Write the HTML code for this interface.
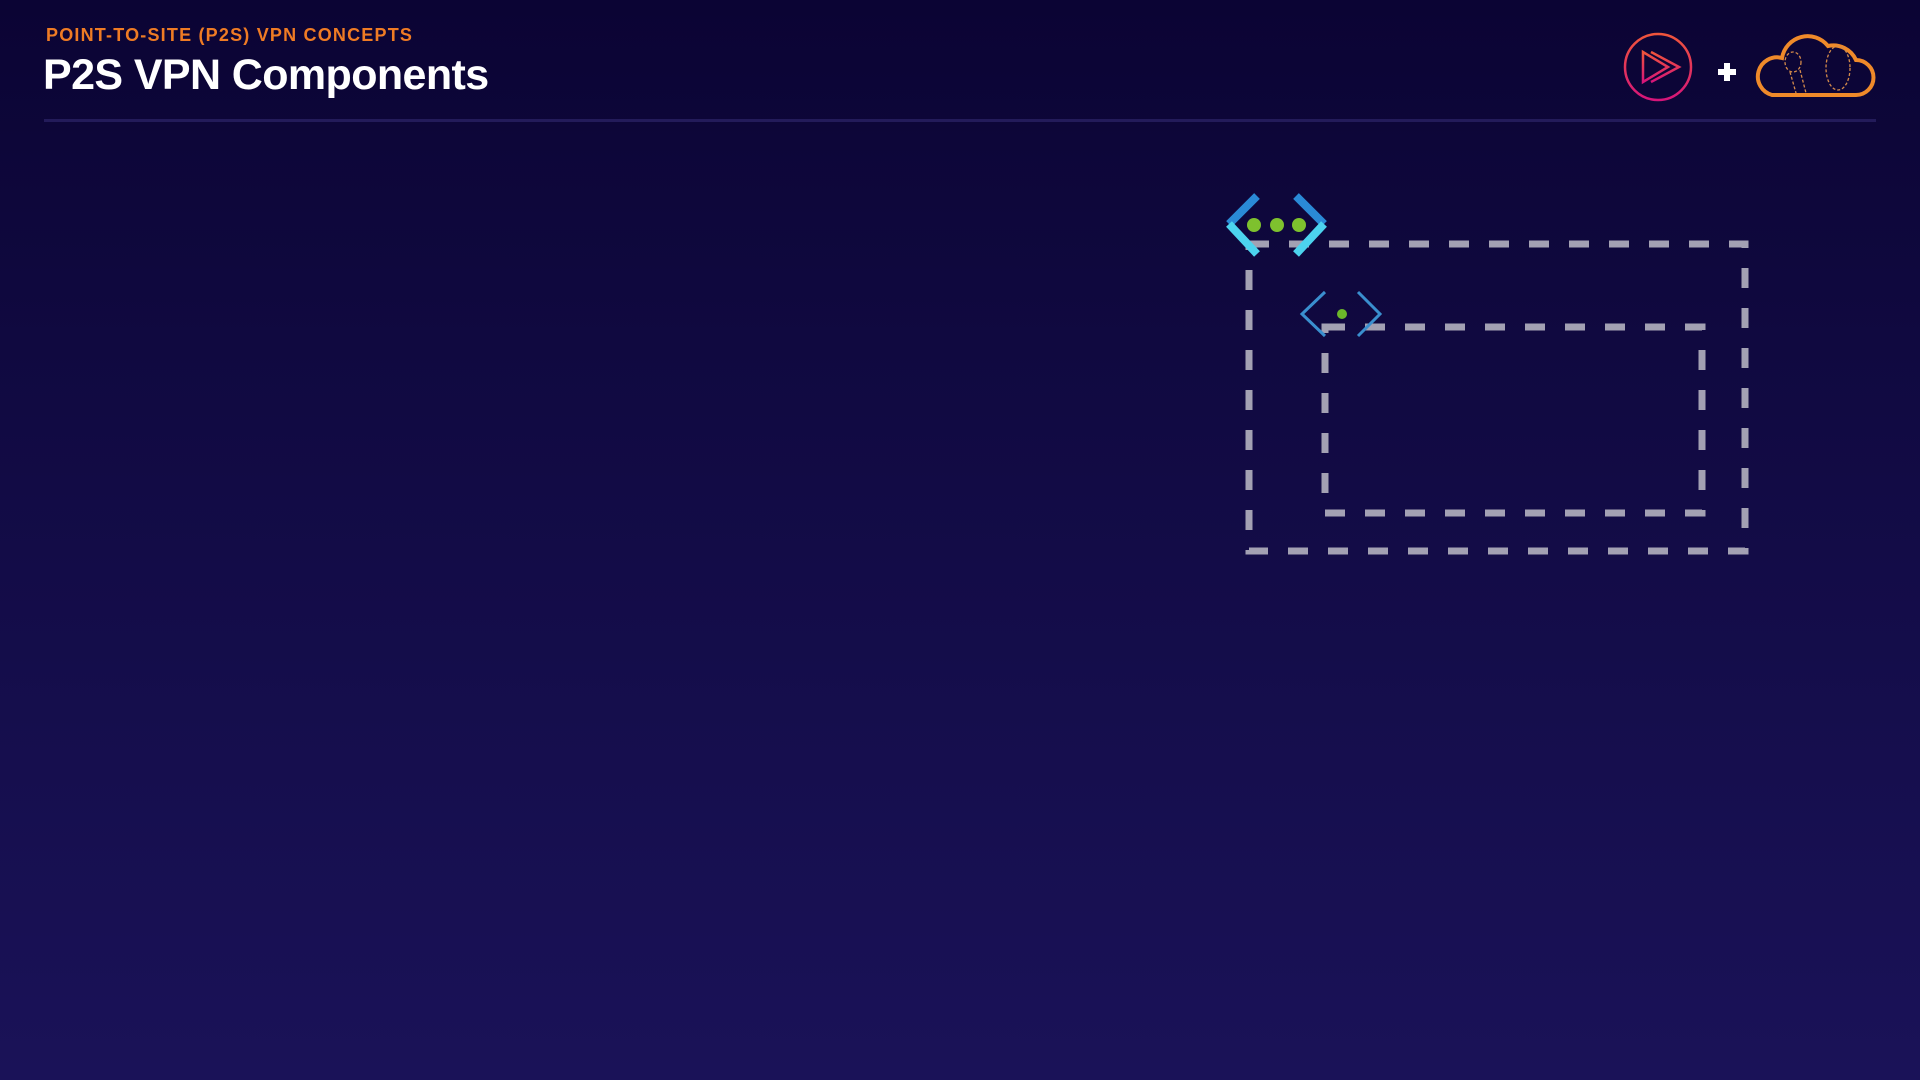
<!DOCTYPE html>
<html><head><meta charset="utf-8"><style>
html,body{margin:0;padding:0}
body{width:1920px;height:1080px;overflow:hidden;background:linear-gradient(180deg,#0b0434 0%,#120b45 45%,#1a1258 100%);font-family:"Liberation Sans",sans-serif;position:relative}
.sub{position:absolute;left:46px;top:25px;color:#ef7b24;font-weight:bold;font-size:18px;letter-spacing:1.2px}
.title{position:absolute;left:43px;top:51px;color:#fff;font-weight:bold;font-size:43px;letter-spacing:-0.6px}
.line{position:absolute;left:44px;top:119px;width:1832px;height:3px;background:#231b5a}
svg{position:absolute;left:0;top:0}
</style></head><body>
<div class="sub">POINT-TO-SITE (P2S) VPN CONCEPTS</div>
<div class="title">P2S VPN Components</div>
<div class="line"></div>
<svg width="1920" height="1080">
<defs><linearGradient id="pg" x1="0" y1="0" x2="0" y2="1"><stop offset="0" stop-color="#f0553b"/><stop offset="1" stop-color="#d6157a"/></linearGradient></defs>
<circle cx="1658" cy="67" r="33" fill="none" stroke="url(#pg)" stroke-width="2.5"/>
<path d="M1643 52 L1643 82 L1668 67 Z M1651 52 L1679 67 L1651 82" fill="none" stroke="url(#pg)" stroke-width="2.5" stroke-linejoin="miter"/>
<path d="M1727 63v18M1718 72h18" stroke="#fff" stroke-width="6"/>
<path d="M1772 95 H1856 A17 17 0 0 0 1856 60 A25 25 0 0 0 1828 46 A26 26 0 0 0 1782 58 A19 19 0 0 0 1772 95 Z" fill="none" stroke="#ef8a2a" stroke-width="4"/>
<g fill="none" stroke="#d48a4a" stroke-width="1.3" stroke-dasharray="3 2"><ellipse cx="1793" cy="62" rx="8" ry="10"/><path d="M1790 72 L1796 93 M1800 70 L1806 93"/><ellipse cx="1838" cy="68" rx="12" ry="22"/></g>
<g fill="none" stroke="#a3a1b3" stroke-width="7" stroke-dasharray="20 20">
<rect x="1249" y="244" width="496" height="307"/>
<rect x="1325" y="327" width="377" height="186"/>
</g>
<g>
<path d="M1257 196 L1229 224" stroke="#2a8ad6" stroke-width="8"/>
<path d="M1229 224 L1257 254" stroke="#4cd3ee" stroke-width="8"/>
<path d="M1296 196 L1324 224" stroke="#2a8ad6" stroke-width="8"/>
<path d="M1324 224 L1296 254" stroke="#4cd3ee" stroke-width="8"/>
<circle cx="1254" cy="225" r="7" fill="#7ec12e"/><circle cx="1277" cy="225" r="7" fill="#7ec12e"/><circle cx="1299" cy="225" r="7" fill="#7ec12e"/>
</g>
<g fill="none" stroke="#3a8fcf" stroke-width="3">
<path d="M1325 292 L1302 314 L1325 336"/><path d="M1358 292 L1380 314 L1358 336"/>
</g>
<circle cx="1342" cy="314" r="5" fill="#6cb82a"/>
</svg>
</body></html>
